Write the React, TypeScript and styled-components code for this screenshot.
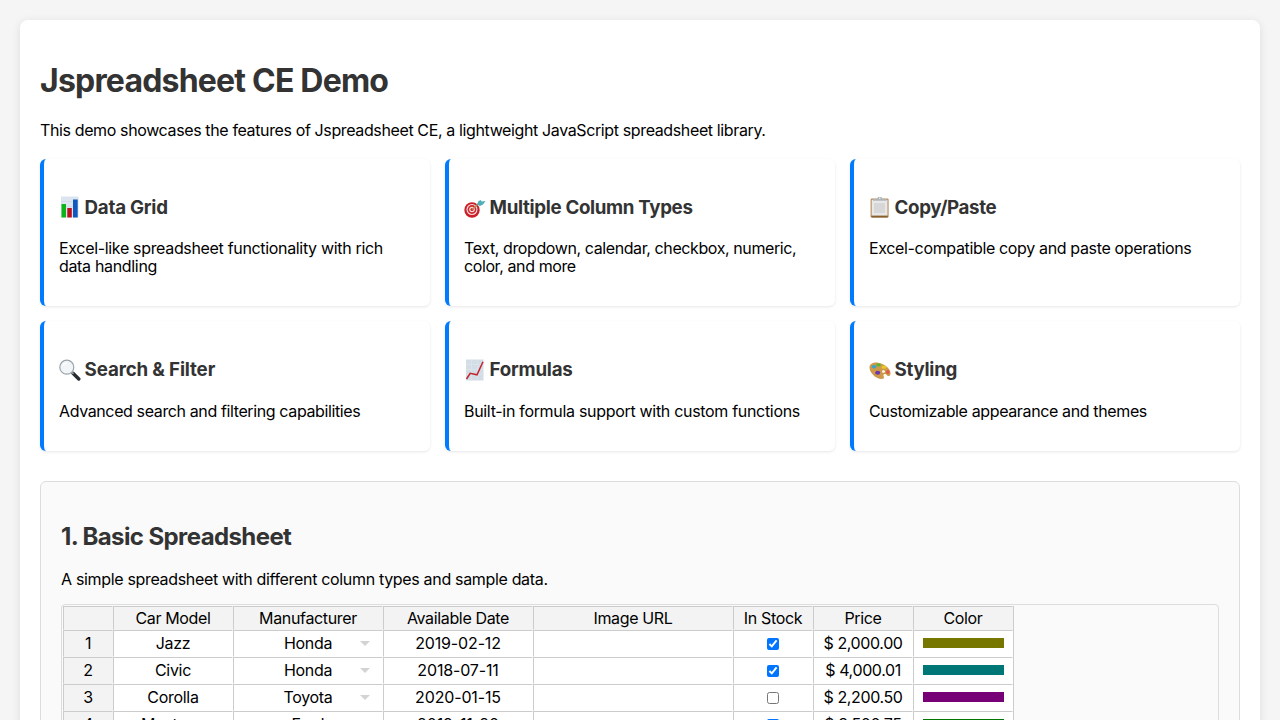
import React from "react";
import styled, { createGlobalStyle } from "styled-components";

const GlobalStyle = createGlobalStyle`
  html { height: 100%; overflow: hidden; }
  body {
    margin: 0;
    height: 720px;
    overflow: hidden;
    background: #f5f5f5;
    color: #000;
    font-family: Inter, "Liberation Sans", sans-serif;
    font-size: 16px;
    line-height: 18px;
  }
`;

const Page = styled.div`
  padding: 20px;
`;

const Container = styled.main`
  padding: 20px;
  background: #fff;
  border-radius: 8px;
  box-shadow: 0 2px 10px rgba(0, 0, 0, 0.1);
`;

const Title = styled.h1`
  margin: 22.2px 0 20.68px;
  font-size: 32px;
  line-height: 38px;
  font-weight: 700;
  letter-spacing: -0.8px;
  color: #333;
  white-space: nowrap;
`;

const Text = styled.p<{ $track?: number }>`
  margin: 16px 0;
  line-height: 18px;
  letter-spacing: ${(p) => p.$track ?? -0.3}px;
`;

const FeatureGrid = styled.section`
  display: grid;
  grid-template-columns: repeat(3, 1fr);
  gap: 15px;
  margin: 20px 0 30px;
`;

const Card = styled.article`
  padding: 15px;
  background: #fff;
  border-left: 4px solid #007bff;
  border-radius: 6px;
  box-shadow: 0 1px 3px rgba(0, 0, 0, 0.1);
`;

const CardTitle = styled.h3<{ $track: number }>`
  display: flex;
  align-items: center;
  gap: 3.6px;
  margin: 19.72px 0 17.72px;
  font-size: 18.72px;
  line-height: 28px;
  font-weight: 700;
  letter-spacing: ${(p) => p.$track}px;
  color: #333;
  white-space: nowrap;
`;

const Glyph = styled.svg`
  display: block;
  flex: none;
  width: 22px;
  height: 22px;
  margin-bottom: 1px;
`;

const Section = styled.section`
  padding: 20px;
  background: #fafafa;
  border: 1px solid #ddd;
  border-radius: 6px;
`;

const SectionTitle = styled.h2`
  margin: 19.92px 0 18.92px;
  font-size: 24px;
  line-height: 29px;
  font-weight: 700;
  letter-spacing: -0.6px;
  color: #333;
`;

const SheetFrame = styled.div`
  padding: 1px;
  border: 1px solid #ddd;
  border-radius: 4px;
`;

const Sheet = styled.table`
  width: 951px;
  table-layout: fixed;
  border-collapse: separate;
  border-spacing: 0;
  border-right: 1px solid #ccc;
  background: #fff;
  text-align: center;
  white-space: nowrap;
`;

const HeadCell = styled.th`
  box-sizing: border-box;
  height: 24px;
  padding: 2px;
  border: 1px solid transparent;
  border-top-color: #ccc;
  border-left-color: #ccc;
  background: #f3f3f3;
  font-weight: 400;
  line-height: 18px;
  letter-spacing: -0.35px;
`;

const Cell = styled.td<{ $index?: boolean; $track?: number }>`
  box-sizing: border-box;
  height: 27px;
  padding: 3px 4px;
  border: 1px solid transparent;
  border-top-color: #ccc;
  border-left-color: #ccc;
  background: ${(p) => (p.$index ? "#f3f3f3" : "#fff")};
  line-height: 18px;
  letter-spacing: ${(p) => p.$track ?? -0.3}px;
`;

const Dropdown = styled.div`
  display: grid;
  grid-template-columns: 1fr auto 1fr;
  align-items: center;
`;

const Arrow = styled.svg`
  grid-column: 3;
  justify-self: end;
  width: 10px;
  height: 5px;
  margin-right: 8px;
`;

const Check = styled.input`
  display: block;
  width: 12px;
  height: 12px;
  margin: 1px auto 0;
`;

const Swatch = styled.div<{ $color: string }>`
  height: 10px;
  margin: 0 4px 0 5px;
  background: ${(p) => p.$color};
`;

const BarsIcon = () => (
  <Glyph viewBox="0 0 22 22">
    <rect x="2" y="0.5" width="17.5" height="21" fill="#dce5ef" />
    <path d="M2 5.5h17.5M2 10.5h17.5M2 15.5h17.5" stroke="#c8d4e0" strokeWidth=".5" />
    <rect x="2.5" y="8" width="4.5" height="13.5" fill="#0ab51a" />
    <rect x="8.3" y="12" width="4.5" height="9.5" fill="#bd1018" />
    <rect x="14" y="3.5" width="4.7" height="18" fill="#1058bd" />
  </Glyph>
);

const TargetIcon = () => (
  <Glyph viewBox="0 0 22 22">
    <circle cx="8" cy="14" r="7.7" fill="#c9202a" />
    <circle cx="8" cy="13.5" r="5.5" fill="#f3dcda" />
    <circle cx="8" cy="13.5" r="4.4" fill="#cf2630" />
    <circle cx="8" cy="13.5" r="2.8" fill="#f3dcda" />
    <circle cx="8" cy="13.5" r="1.6" fill="#cf2630" />
    <path d="M8 13.5l6-5.5" stroke="#b78d52" strokeWidth="1.5" />
    <path d="M13 8.5l1.500-3.500 2.500-1 .5 1.500 4-.5-2.500 3.500-3 1.500z" fill="#50aebb" />
  </Glyph>
);

const ClipboardIcon = () => (
  <Glyph viewBox="0 0 22 22">
    <rect x="1.6" y="2.5" width="18" height="19" rx="1.3" fill="#b58b58" />
    <rect x="2.7" y="3.8" width="15.8" height="16" fill="#e8e8e8" />
    <rect x="5" y="7" width="11" height="10" fill="#d7d7d7" />
    <path d="M2.5 19.7h16.2v1.8H2.5z" fill="#86602f" />
    <path d="M4 4.7V3h4l1-2h3.5l1 2h4v1.7z" fill="#aeb6ba" />
    <circle cx="10.8" cy="2.3" r=".7" fill="#fff" />
  </Glyph>
);

const SearchIcon = () => (
  <Glyph viewBox="0 0 22 22">
    <path d="M14 14.200l5.800 5.800" stroke="#272c31" strokeWidth="3.4" strokeLinecap="round" />
    <path d="M12.500 12.800l2 2" stroke="#8d969d" strokeWidth="1.8" />
    <circle cx="7.800" cy="8.200" r="7" fill="#f2f5f7" stroke="#9aa4ac" strokeWidth="1.2" />
    <path d="M4 6.700Q5 4 8 4" stroke="#fff" strokeWidth="1.2" fill="none" />
  </Glyph>
);

const TrendIcon = () => (
  <Glyph viewBox="0 0 22 22">
    <rect x="2" y=".5" width="17.5" height="21" fill="#d3dde6" />
    <path d="M2 5.5h17.5M2 10.5h17.5M2 15.5h17.5M7.5.5v21M13.5.5v21" stroke="#e0e8ee" strokeWidth=".5" />
    <path d="M2.5 20l3.7-5.7 6.8 1.5 6-13" stroke="#c3252d" strokeWidth="1.5" fill="none" />
  </Glyph>
);

const PaletteIcon = () => (
  <Glyph viewBox="0 0 22 22">
    <path d="M.5 8.500C.5 4.500 5 3 9 3.700c6 1 12 5 12.500 10 .3 3-2 4.500-3.500 2.500-1-1.500-3.500-2-3.500 0 0 1.500 1.500 3-.5 3.600C7.500 21 .5 14 .5 8.500z" fill="#cf9a48" />
    <ellipse cx="14.500" cy="12.500" rx="1.500" ry="1.200" fill="#fff" />
    <ellipse cx="9.500" cy="5.800" rx="2.300" ry="1.600" fill="#54b735" />
    <ellipse cx="5" cy="7.800" rx="2.500" ry="1.800" fill="#3ea4c5" />
    <ellipse cx="15" cy="8.200" rx="2.300" ry="1.600" fill="#e9c52f" />
    <ellipse cx="18.800" cy="13" rx="1.800" ry="2" fill="#e2584b" />
    <ellipse cx="8.700" cy="13.800" rx="2.600" ry="2" fill="#6d38ae" />
  </Glyph>
);

const features = [
  { icon: <BarsIcon />, title: "Data Grid", track: -0.23, body: "Excel-like spreadsheet functionality with rich data handling", bodyTrack: -0.33 },
  { icon: <TargetIcon />, title: "Multiple Column Types", track: -0.33, body: "Text, dropdown, calendar, checkbox, numeric, color, and more", bodyTrack: -0.4 },
  { icon: <ClipboardIcon />, title: "Copy/Paste", track: -0.35, body: "Excel-compatible copy and paste operations", bodyTrack: -0.35 },
  { icon: <SearchIcon />, title: "Search & Filter", track: -0.13, body: "Advanced search and filtering capabilities", bodyTrack: -0.38 },
  { icon: <TrendIcon />, title: "Formulas", track: -0.23, body: "Built-in formula support with custom functions", bodyTrack: -0.31 },
  { icon: <PaletteIcon />, title: "Styling", track: -0.28, body: "Customizable appearance and themes", bodyTrack: -0.37 },
];

const columns = [
  { label: "", width: 50 },
  { label: "Car Model", width: 120 },
  { label: "Manufacturer", width: 150 },
  { label: "Available Date", width: 150 },
  { label: "Image URL", width: 200 },
  { label: "In Stock", width: 80 },
  { label: "Price", width: 100 },
  { label: "Color", width: 100 },
];

const cars = [
  { model: "Jazz", maker: "Honda", date: "2019-02-12", stock: true, price: "$ 2,000.00", color: "#777700" },
  { model: "Civic", maker: "Honda", date: "2018-07-11", stock: true, price: "$ 4,000.01", color: "#007777" },
  { model: "Corolla", maker: "Toyota", date: "2020-01-15", stock: false, price: "$ 2,200.50", color: "#770077" },
  { model: "Mustang", maker: "Ford", date: "2019-11-20", stock: true, price: "$ 3,500.75", color: "#007700" },
];

export default function App() {
  return (
    <Page>
      <GlobalStyle />
      <Container>
        <Title>Jspreadsheet CE Demo</Title>
        <Text $track={-0.375}>This demo showcases the features of Jspreadsheet CE, a lightweight JavaScript spreadsheet library.</Text>
        <FeatureGrid>
          {features.map((f) => (
            <Card key={f.title}>
              <CardTitle $track={f.track}>{f.icon}{f.title}</CardTitle>
              <Text $track={f.bodyTrack}>{f.body}</Text>
            </Card>
          ))}
        </FeatureGrid>
        <Section>
          <SectionTitle>1. Basic Spreadsheet</SectionTitle>
          <Text $track={-0.33}>A simple spreadsheet with different column types and sample data.</Text>
          <SheetFrame>
            <Sheet>
              <colgroup>
                {columns.map((c) => <col key={c.label} width={c.width} />)}
              </colgroup>
              <thead>
                <tr>{columns.map((c) => <HeadCell key={c.label}>{c.label}</HeadCell>)}</tr>
              </thead>
              <tbody>
                {cars.map((car, i) => (
                  <tr key={car.model}>
                    <Cell $index>{i + 1}</Cell>
                    <Cell>{car.model}</Cell>
                    <Cell>
                      <Dropdown>
                        <i />
                        <span>{car.maker}</span>
                        <Arrow viewBox="0 0 10 5"><path d="M0 0l5 5 5-5z" fill="#d3d3d3" /></Arrow>
                      </Dropdown>
                    </Cell>
                    <Cell $track={-0.15}>{car.date}</Cell>
                    <Cell />
                    <Cell><Check type="checkbox" defaultChecked={car.stock} /></Cell>
                    <Cell $track={-0.38}>{car.price}</Cell>
                    <Cell><Swatch $color={car.color} /></Cell>
                  </tr>
                ))}
              </tbody>
            </Sheet>
          </SheetFrame>
        </Section>
      </Container>
    </Page>
  );
}
